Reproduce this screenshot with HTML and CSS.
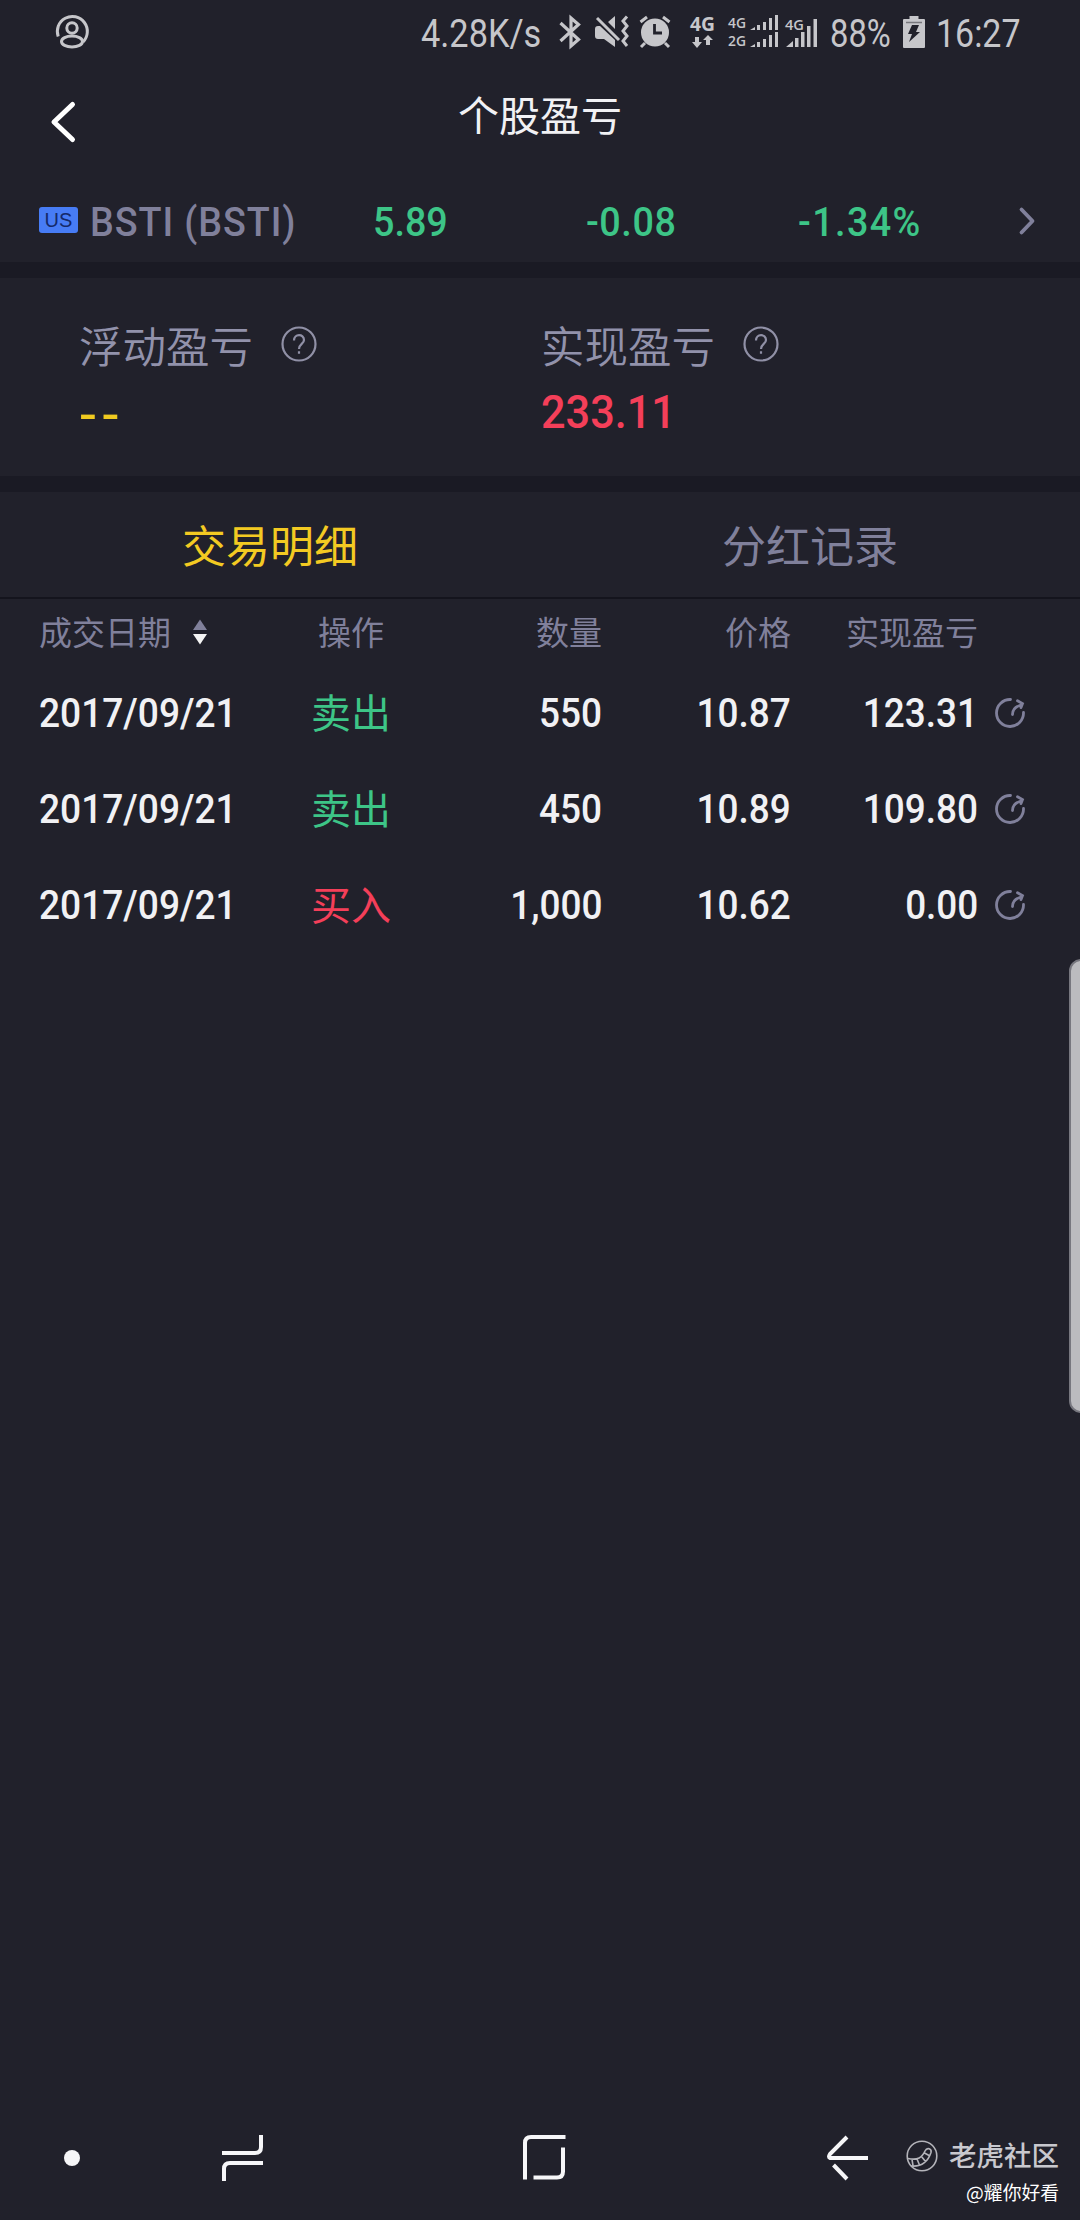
FILE: index.html
```html
<!DOCTYPE html>
<html lang="zh-CN">
<head>
<meta charset="utf-8">
<title>个股盈亏</title>
<link rel="stylesheet" href="styles.css">
</head>
<body>
<div class="screen">
  <div class="status">
    <svg class="st-user" width="34" height="34" viewBox="0 0 34 34" fill="none" stroke="#c6c6ca" stroke-width="3"><path d="M3.2 21.5A15 15 0 1 1 28 27"/><circle cx="17" cy="13" r="5.2"/><ellipse cx="17" cy="26.500" rx="10.500" ry="5.500"/></svg>
    <span class="st-text speed"><span class="fit">4.28K/s</span></span>
    <svg class="st-bt" width="22" height="34" viewBox="0 0 22 34" fill="none" stroke="#c6c6ca" stroke-width="3.200"><path d="M1.500 8 19.500 24.500 12 31V3l7.500 6.500L1.500 26"/></svg>
    <svg class="st-mute" width="36" height="34" viewBox="0 0 36 34"><path fill="#c6c6ca" d="M0 14q0-3 3-3h2l15 14v7L9 24H3q-3 0-3-3zM13 7l7-6v13z"/><path d="M2 3 24 25" stroke="#c6c6ca" stroke-width="3"/><path d="M32 1.500 28 6 32 11 28 16l4 5-4 5 4 5" fill="none" stroke="#c6c6ca" stroke-width="3"/></svg>
    <svg class="st-alarm" width="32" height="34" viewBox="0 0 32 34"><circle cx="16" cy="17.500" r="14" fill="#c6c6ca"/><path d="M1.500 7 8 2M30.500 7 24 2M6 28l-4 4M26 28l4 4" stroke="#c6c6ca" stroke-width="3"/><path d="M15.500 9v9H23" fill="none" stroke="#21212b" stroke-width="2.800"/></svg>
    <svg class="st-data" width="26" height="34" viewBox="0 0 26 34" fill="#c6c6ca"><text class="net" x="0" y="16" font-size="19" textLength="25" lengthAdjust="spacingAndGlyphs">4G</text><path d="M5 22h4v5h3l-5 6-5-6h3zM16 30v-5h-3l5-5 5 5h-3v5z"/></svg>
    <svg class="st-dual" width="51" height="34" viewBox="0 0 51 34" fill="#c6c6ca"><text class="net thin" x="0" y="13" font-size="15" textLength="18" lengthAdjust="spacingAndGlyphs">4G</text><text class="net thin" x="0" y="31" font-size="15" textLength="18" lengthAdjust="spacingAndGlyphs">2G</text><path d="M22 15l5-3v3zM29 10h3v5h-3zM35 7h3v8h-3zM41 3h3v12h-3zM47 0h3v15h-3zM22 32l5-3v3zM29 27h3v5h-3zM35 24h3v8h-3zM41 20h3v12h-3zM47 17h3v15h-3z"/></svg>
    <svg class="st-sig" width="33" height="34" viewBox="0 0 33 34" fill="#c6c6ca"><text class="net thin" x="0" y="15" font-size="15" textLength="19" lengthAdjust="spacingAndGlyphs">4G</text><path d="M1 32l7-6v6zM10 23h3.500v9H10zM16 17h3.500v15H16zM22 11h3.500v21H22zM28.500 4H32v28h-3.500z"/></svg>
    <span class="st-text pct"><span class="fit">88%</span></span>
    <svg class="st-bat" width="22" height="34" viewBox="0 0 22 34"><path fill="#c6c6ca" d="M6.500 1h9v3H21q1 0 1 1v27q0 1-1 1H1q-1 0-1-1V5q0-1 1-1h5.500z"/><path d="M3 7.500h16" stroke="#77777c" stroke-width="1.500"/><path fill="#21212b" d="M9 10h7l-3 7h4L6 27l3-8H5z"/></svg>
    <span class="st-text clock"><span class="fit">16:27</span></span>
  </div>

  <header class="titlebar">
    <svg width="26" height="42" viewBox="0 0 26 42" fill="none" stroke="#fff" stroke-width="5" stroke-linecap="round" stroke-linejoin="round"><path d="M22.500 3.500 4 21l18.500 17.500"/></svg>
    <h1>个股盈亏</h1>
  </header>

  <section class="ticker">
    <span class="badge">US</span>
    <span class="num name"><span class="fit">BSTI (BSTI)</span></span>
    <span class="num last"><span class="fit">5.89</span></span>
    <span class="num change"><span class="fit">-0.08</span></span>
    <span class="num rate"><span class="fit">-1.34%</span></span>
    <svg width="18" height="28" viewBox="0 0 18 28" fill="none" stroke="#80809b" stroke-width="3.800" stroke-linecap="round" stroke-linejoin="round"><path d="M3.500 2.500 14.500 14l-11 11.500"/></svg>
  </section>

  <section class="summary">
    <div class="metric">
      <div class="label">浮动盈亏<svg width="36" height="36" viewBox="0 0 36 36" fill="none" stroke="#9090a6" stroke-width="2.200"><circle cx="18" cy="18" r="16.500"/><path d="M13 14.500c0-7 10-7 10-.5 0 4-5 4-5 9M18 25.300v2.500"/></svg></div>
      <div class="value flat"><span class="fit">--</span></div>
    </div>
    <div class="metric">
      <div class="label">实现盈亏<svg width="36" height="36" viewBox="0 0 36 36" fill="none" stroke="#9090a6" stroke-width="2.200"><circle cx="18" cy="18" r="16.500"/><path d="M13 14.500c0-7 10-7 10-.5 0 4-5 4-5 9M18 25.300v2.500"/></svg></div>
      <div class="value up"><span class="fit">233.11</span></div>
    </div>
  </section>

  <nav class="tabs"><span class="active">交易明细</span><span>分红记录</span></nav>

  <main class="trades">
    <div class="row head">
      <span class="date">成交日期<svg width="14" height="26" viewBox="0 0 14 26"><path fill="#80809b" d="M7 .5 14 11H0z"/><path fill="#f4f4f4" d="M0 15h14L7 25.500z"/></svg></span>
      <span class="side">操作</span><span class="qty">数量</span><span class="price">价格</span><span class="pl">实现盈亏</span>
    </div>
    <div class="row">
      <span class="date"><span class="fit">2017/09/21</span></span><span class="side sell">卖出</span><span class="qty"><span class="fit">550</span></span><span class="price"><span class="fit">10.87</span></span><span class="pl"><span class="fit">123.31</span></span>
      <svg class="share" width="32" height="32" viewBox="0 0 32 32"><path d="M16.500 2.500A13.500 13.500 0 1 0 29.500 15.500M18.500 17.500q0-7 8.500-9.500M23.500 3.800l5 2.800-1.500 4"/></svg>
    </div>
    <div class="row">
      <span class="date"><span class="fit">2017/09/21</span></span><span class="side sell">卖出</span><span class="qty"><span class="fit">450</span></span><span class="price"><span class="fit">10.89</span></span><span class="pl"><span class="fit">109.80</span></span>
      <svg class="share" width="32" height="32" viewBox="0 0 32 32"><path d="M16.500 2.500A13.500 13.500 0 1 0 29.500 15.500M18.500 17.500q0-7 8.500-9.500M23.500 3.800l5 2.800-1.500 4"/></svg>
    </div>
    <div class="row">
      <span class="date"><span class="fit">2017/09/21</span></span><span class="side buy">买入</span><span class="qty"><span class="fit">1,000</span></span><span class="price"><span class="fit">10.62</span></span><span class="pl"><span class="fit">0.00</span></span>
      <svg class="share" width="32" height="32" viewBox="0 0 32 32"><path d="M16.500 2.500A13.500 13.500 0 1 0 29.500 15.500M18.500 17.500q0-7 8.500-9.500M23.500 3.800l5 2.800-1.500 4"/></svg>
    </div>
  </main>

  <footer class="softkeys">
    <svg width="16" height="16" viewBox="0 0 16 16"><circle cx="8" cy="8" r="8" fill="#f6f6f8"/></svg>
    <svg class="k-recent" width="41" height="48" viewBox="0 0 41 48"><path d="M0 19h33q6 0 6-6V1M2 47V35q0-6 6-6h33"/></svg>
    <svg class="k-home" width="43" height="46" viewBox="0 0 43 46"><path d="M2 44.500V8q0-6 6-6h34.500M10.500 42.500H34q6 0 6-6V12.500"/></svg>
    <svg class="k-back" width="42" height="46" viewBox="0 0 42 46"><path d="M41 23H3q-2-1 0-4L20 2M6.500 30 20 44"/></svg>
  </footer>

  <div class="edge-handle"></div>
  <div class="watermark">
    <div class="brand"><svg width="32" height="32" viewBox="0 0 32 32" fill="none" stroke="#b4b4ba" stroke-width="1.600"><circle cx="16" cy="16" r="14.800"/><path d="M2 18.500c10 2 14-1 17-7.500 2-4 7-2.500 6 1.500C22 21.500 16 27 5 26M6 19.500l1 6M11 19l2.500 6M15.500 16.500l4 5M18.500 13l5.500 3"/></svg>老虎社区</div>
    <div class="author">@耀你好看</div>
  </div>
</div>
</body>
</html>
```
FILE: styles.css
```css
* { box-sizing: border-box; }
body { margin: 0; background: #21212b; }
.screen {
  position: relative;
  width: 1080px;
  height: 2220px;
  display: flex;
  flex-direction: column;
  overflow: hidden;
  background: #21212b;
  color: #f1f1f4;
  font-family: Roboto, "Noto Sans CJK SC", sans-serif;
  white-space: nowrap;
}
svg { display: block; flex: none; overflow: visible; }
.fit { display: inline-block; transform-origin: 0 50%; }

.status { height: 64px; flex: none; display: flex; align-items: flex-start; padding: 15px 0 0 55px; color: #c6c6ca; }
.st-text { font-size: 39px; line-height: 38px; height: 38px; flex: none; }
.speed { width: 121px; margin-left: 332px; }
.speed .fit { transform: scaleX(.88); }
.st-bt { margin-left: 17px; }
.st-mute { margin-left: 14px; }
.st-alarm { margin-left: 8px; }
.st-data { margin-left: 19px; }
.st-dual { margin-left: 12px; }
.st-sig { margin-left: 6px; }
.net { font-family: "Open Sans", sans-serif; font-weight: 700; }
.thin { font-weight: 600; }
.pct { width: 62px; margin-left: 12px; }
.pct .fit { transform: scaleX(.84); }
.st-bat { margin-left: 11px; }
.clock { width: 90px; margin-left: 11px; }
.clock .fit { transform: scaleX(.87); }

.titlebar { height: 110px; flex: none; display: grid; grid-template-columns: 50px 1fr 50px; }
.titlebar svg { margin: 37px 0 0 50px; }
.titlebar h1 { margin: 23px 0 0; font-size: 41px; font-weight: 400; line-height: 60px; text-align: center; }

.ticker { height: 88px; flex: none; display: flex; align-items: flex-start; padding: 24px 0 0 39px; color: #3dc587; }
.badge { width: 39px; height: 26px; margin-top: 9px; border-radius: 3px; background: #477cf5; color: #142969; font: 20px/27px "Liberation Sans", sans-serif; text-align: center; }
.num { font-size: 41px; font-weight: 500; line-height: 48px; flex: none; }
.num .fit { transform: scaleX(.92); }
.name { width: 269px; margin-left: 12px; color: #80809b; }
.name .fit { letter-spacing: 1px; }
.last { width: 213px; margin-left: 14px; }
.change { width: 212px; }
.change .fit { letter-spacing: .6px; }
.rate { width: 220px; }
.rate .fit { letter-spacing: 1.500px; }
.ticker > svg { margin-top: 9px; }

.summary { height: 230px; flex: none; display: grid; grid-template-columns: 462px 1fr; padding: 37px 0 0 79px; border: solid #1a1a24; border-width: 16px 0; }
.label { display: flex; align-items: center; font-size: 43.500px; line-height: 60px; color: #9292ab; font-family: "Noto Sans CJK SC", sans-serif; font-weight: 350; }
.label svg { margin-left: 28px; margin-top: -3px; }
.value { font-size: 46px; font-weight: 500; line-height: 60px; margin-top: 7px; }
.value .fit { transform: scaleX(.94); }
.flat { color: #f0ca20; }
.value.flat { padding-top: 3px; }
.flat .fit { transform: scaleX(1.15); letter-spacing: 4px; }
.up { color: #f43f59; }

.tabs { height: 107px; flex: none; display: grid; grid-template-columns: 1fr 1fr; border-bottom: 2px solid #14141d; font-size: 44px; line-height: 112px; text-align: center; color: #80809b; }
.tabs .active { color: #f3ca22; }

.trades { flex: 1; }
.row { height: 96px; display: grid; grid-template-columns: 251px 122px 190px 189px 187px 1fr; align-items: center; padding-left: 39px; font-size: 41px; font-weight: 500; line-height: 60px; }
.head { height: 66px; font-size: 33px; font-weight: 400; color: #80809b; padding-top: 3px; }
.head .date { display: flex; align-items: center; }
.head svg { margin: -3px 0 0 22px; }
.date .fit { transform: scaleX(.905); }
.side { text-align: center; font-weight: 400; }
.row:not(.head) .side { font-size: 40px; padding-top: 3px; }
.sell { color: #3dc587; }
.buy { color: #f43f59; }
.qty, .price, .pl { text-align: right; }
.qty .fit, .price .fit, .pl .fit { transform: scaleX(.9); transform-origin: 100% 50%; }
.share { margin-left: 16px; fill: none; stroke: #80809b; stroke-width: 2.800; stroke-linecap: round; }

.softkeys { height: 124px; flex: none; display: flex; align-items: center; padding-left: 64px; fill: none; stroke-width: 4; }
.softkeys path { stroke: #f6f6f8; }
.k-recent { margin-left: 142px; }
.k-home { margin-left: 260px; }
.k-back { margin-left: 261px; }

.edge-handle { position: absolute; right: -13px; top: 959px; width: 24px; height: 454px; border: 2px solid #77777f; border-radius: 14px; background: #bbbbbf; }
.watermark { position: absolute; right: 21px; top: 2135px; text-align: right; font-family: "Noto Sans CJK SC", sans-serif; }
.brand { display: flex; align-items: center; font-size: 27.500px; font-weight: 500; line-height: 38px; color: #c8c8ce; }
.brand svg { margin-right: 11px; margin-top: 3px; }
.author { font-size: 18.800px; line-height: 28px; margin-top: 5px; color: #fff; }
```
